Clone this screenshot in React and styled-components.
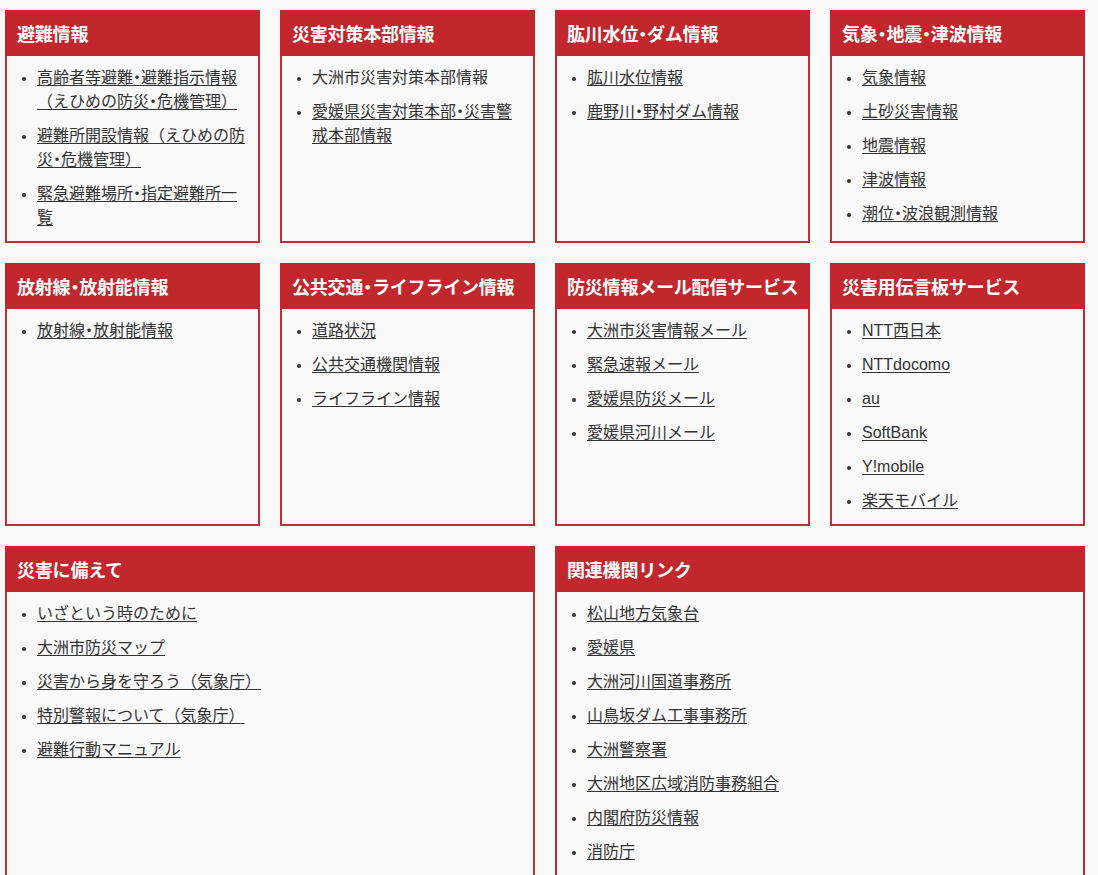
import React from 'react'
import styled, { createGlobalStyle } from 'styled-components'

const GlobalStyle = createGlobalStyle`
  body {
    margin: 0;
    background: #f9f9f9;
    font-family: "Liberation Sans", "Noto Sans CJK JP", sans-serif;
    color: #333;
  }
`

const sections = [
  {
    title: '避難情報',
    items: [
      { text: '高齢者等避難・避難指示情報（えひめの防災・危機管理）' },
      { text: '避難所開設情報（えひめの防災・危機管理）' },
      { text: '緊急避難場所・指定避難所一覧' },
    ],
  },
  {
    title: '災害対策本部情報',
    items: [
      { text: '大洲市災害対策本部情報', plain: true },
      { text: '愛媛県災害対策本部・災害警戒本部情報' },
    ],
  },
  {
    title: '肱川水位・ダム情報',
    items: [{ text: '肱川水位情報' }, { text: '鹿野川・野村ダム情報' }],
  },
  {
    title: '気象・地震・津波情報',
    items: [
      { text: '気象情報' },
      { text: '土砂災害情報' },
      { text: '地震情報' },
      { text: '津波情報' },
      { text: '潮位・波浪観測情報' },
    ],
  },
  {
    title: '放射線・放射能情報',
    items: [{ text: '放射線・放射能情報' }],
  },
  {
    title: '公共交通・ライフライン情報',
    items: [{ text: '道路状況' }, { text: '公共交通機関情報' }, { text: 'ライフライン情報' }],
  },
  {
    title: '防災情報メール配信サービス',
    items: [
      { text: '大洲市災害情報メール' },
      { text: '緊急速報メール' },
      { text: '愛媛県防災メール' },
      { text: '愛媛県河川メール' },
    ],
  },
  {
    title: '災害用伝言板サービス',
    items: [
      { text: 'NTT西日本' },
      { text: 'NTTdocomo' },
      { text: 'au' },
      { text: 'SoftBank' },
      { text: 'Y!mobile' },
      { text: '楽天モバイル' },
    ],
  },
  {
    title: '災害に備えて',
    wide: true,
    items: [
      { text: 'いざという時のために' },
      { text: '大洲市防災マップ' },
      { text: '災害から身を守ろう（気象庁）' },
      { text: '特別警報について（気象庁）' },
      { text: '避難行動マニュアル' },
    ],
  },
  {
    title: '関連機関リンク',
    wide: true,
    items: [
      { text: '松山地方気象台' },
      { text: '愛媛県' },
      { text: '大洲河川国道事務所' },
      { text: '山鳥坂ダム工事事務所' },
      { text: '大洲警察署' },
      { text: '大洲地区広域消防事務組合' },
      { text: '内閣府防災情報' },
      { text: '消防庁' },
    ],
  },
]

// the middle dot is set half width, as in the original font
function Label({ text }) {
  const parts = text.split('・')
  return parts.map((part, i) => (
    <React.Fragment key={i}>
      {i > 0 && <Dot>・</Dot>}
      {part}
    </React.Fragment>
  ))
}

export default function App() {
  return (
    <>
      <GlobalStyle />
      <Grid>
        {sections.map((s) => (
          <Card key={s.title} wide={s.wide}>
            <Header>
              <Label text={s.title} />
            </Header>
            <List>
              {s.items.map((item) => (
                <Item key={item.text}>
                  {item.plain ? (
                    <Label text={item.text} />
                  ) : (
                    <Link href="#">
                      <Label text={item.text} />
                    </Link>
                  )}
                </Item>
              ))}
            </List>
          </Card>
        ))}
      </Grid>
    </>
  )
}

const Grid = styled.div`
  display: grid;
  grid-template-columns: repeat(4, 255px);
  column-gap: 20px;
  row-gap: 20px;
  padding: 10px 0 0 5px;
`

const Card = styled.section.withConfig({ shouldForwardProp: (p) => p !== 'wide' })`
  grid-column: ${(p) => (p.wide ? 'span 2' : 'span 1')};
  border: 2px solid #bd2f35;
  background: #f9f9f9;
  display: flex;
  flex-direction: column;
`

const Header = styled.h2`
  margin: -2px -2px 0;
  height: 46px;
  padding: 0 12px;
  display: flex;
  align-items: center;
  background: #c1272d;
  color: #fff;
  font-size: 18px;
  font-weight: bold;
  letter-spacing: -0.2px;
  white-space: nowrap;
`

const Dot = styled.span`
  font-feature-settings: "halt";
`

const List = styled.ul`
  margin: 0;
  padding: 10px 12px 1px 30px;
  list-style: disc;
`

const Item = styled.li`
  font-size: 16px;
  line-height: 24px;
  margin-bottom: 10px;
  &::marker {
    font-size: 14px;
  }
`

const Link = styled.a`
  color: #333;
  text-decoration: underline;
  text-underline-offset: 2px;
`
